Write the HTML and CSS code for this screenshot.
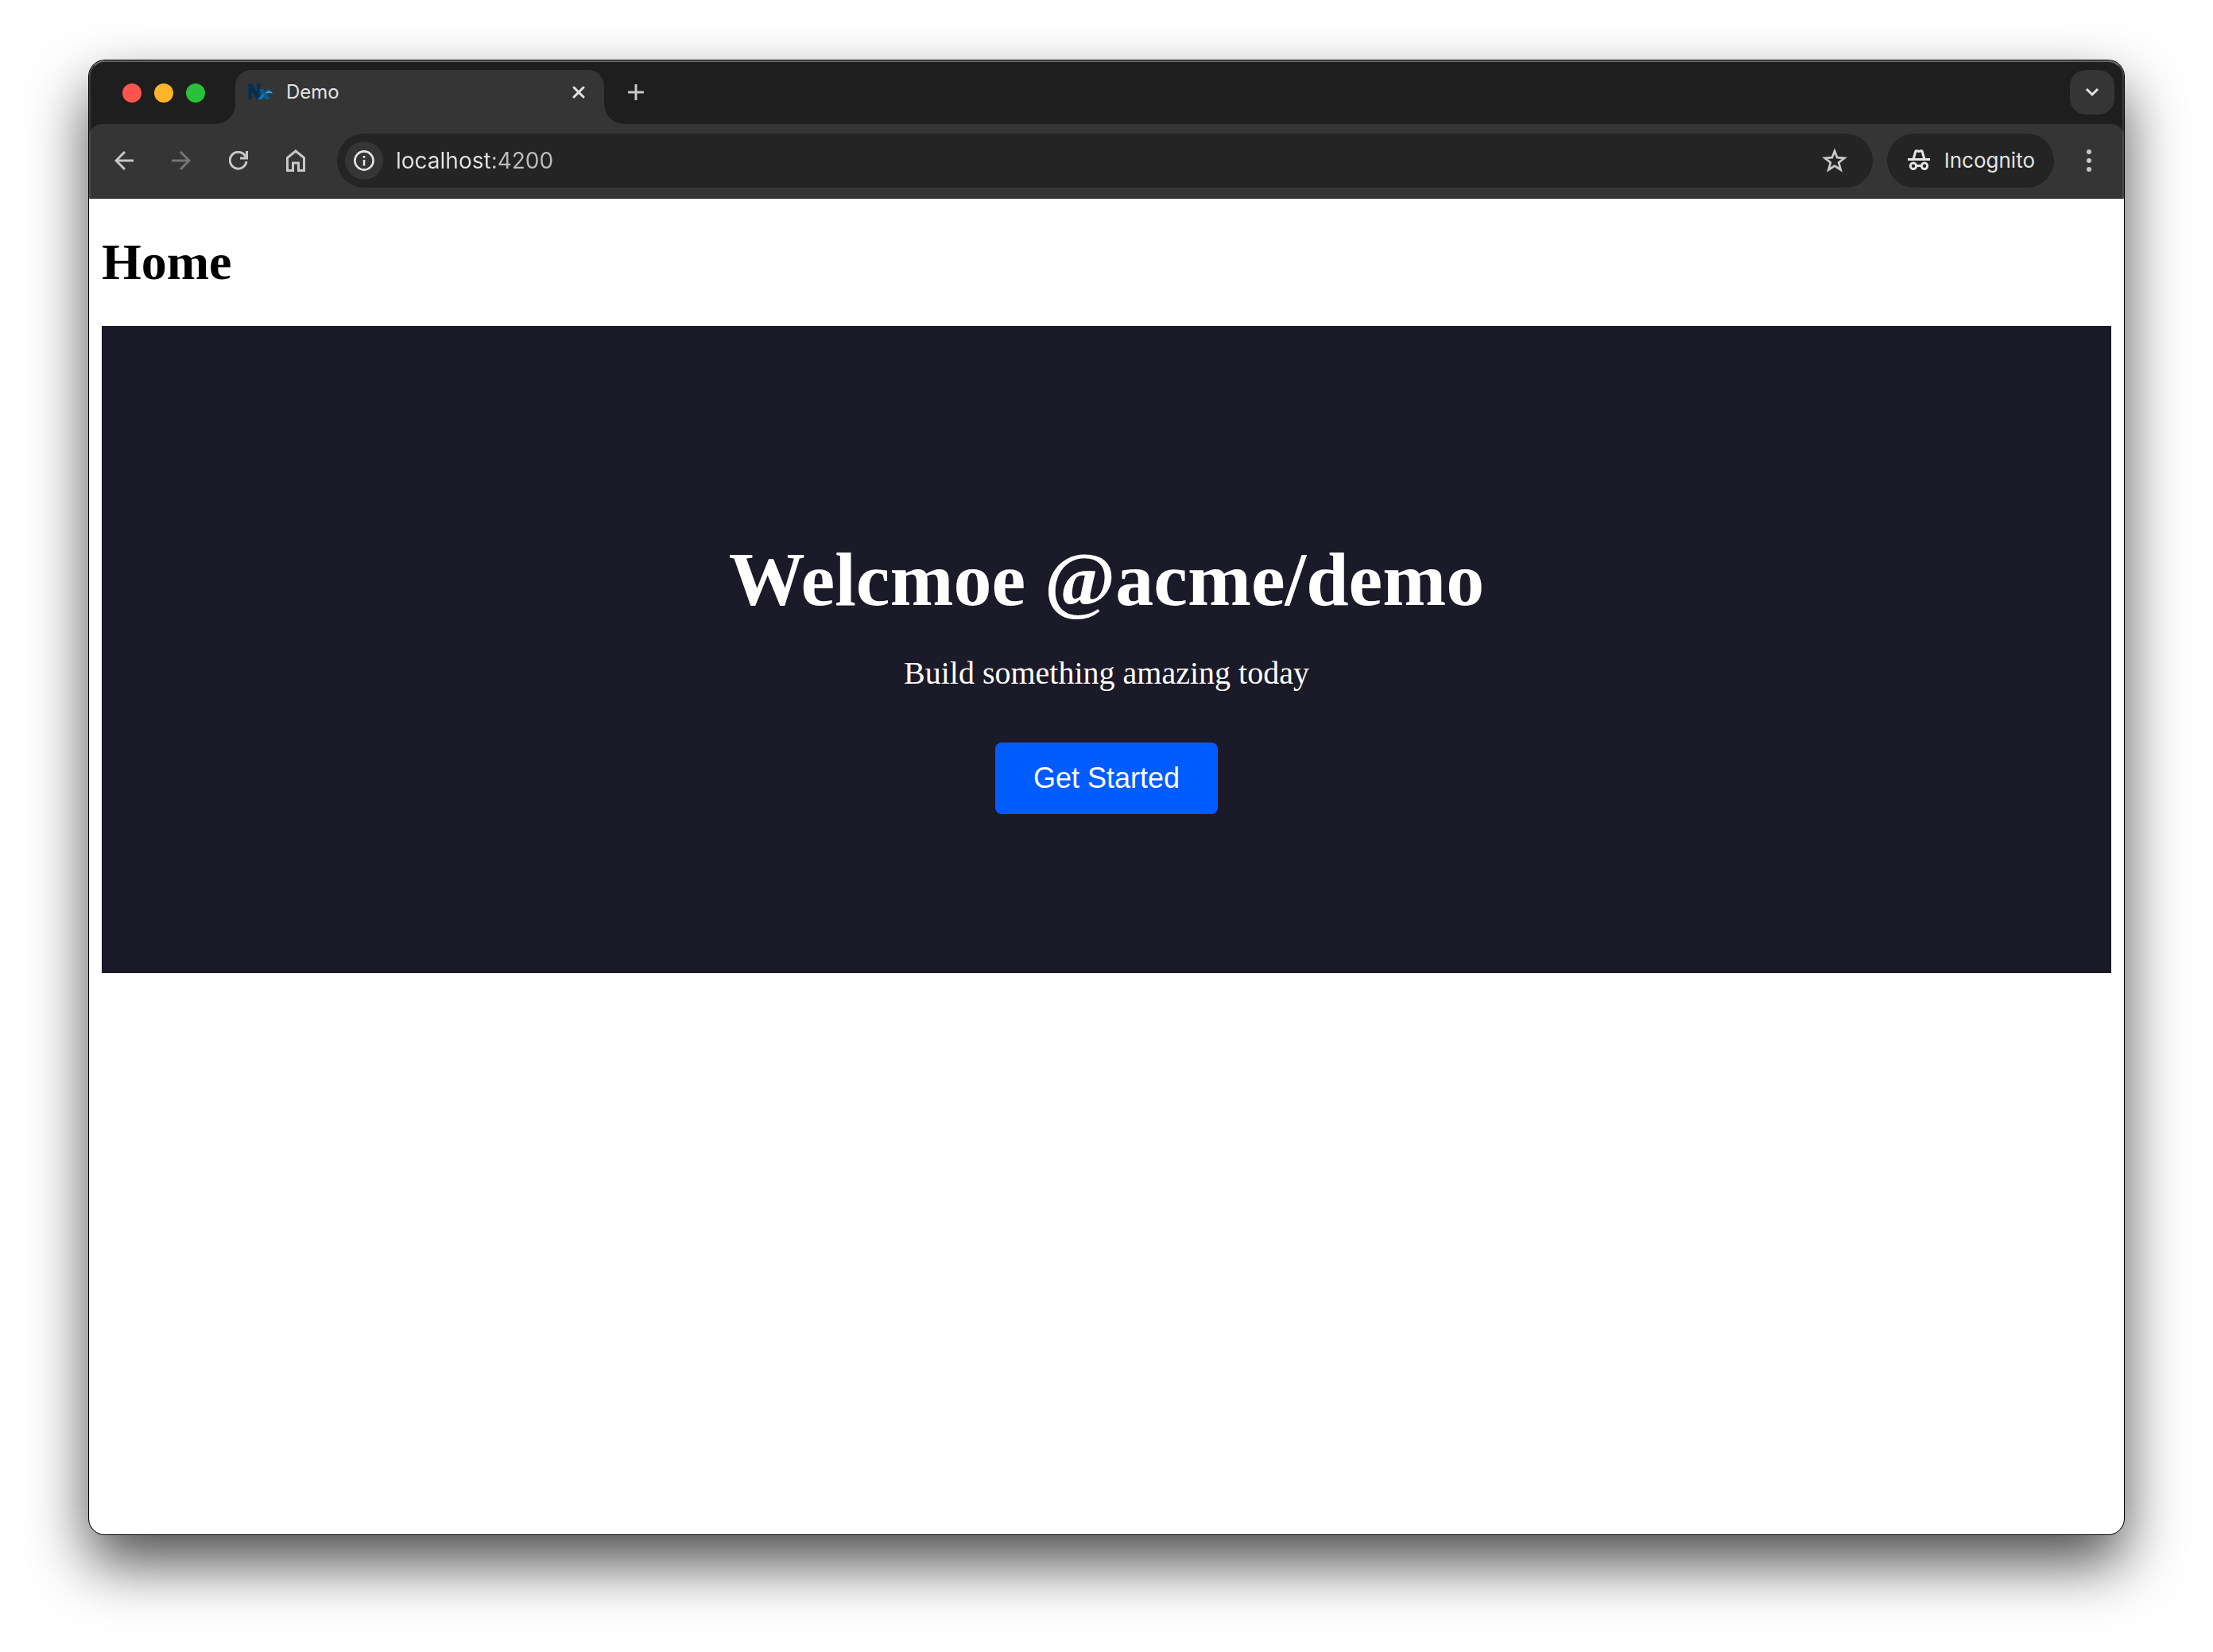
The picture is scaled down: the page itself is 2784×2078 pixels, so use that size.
FILE: index.html
```html
<!DOCTYPE html>
<html lang="en">
<head>
<meta charset="utf-8">
<title>Demo</title>
<link rel="stylesheet" href="styles.css">
</head>
<body>
<div class="window">
  <header class="chrome">
    <div class="tabstrip">
      <div class="lights">
        <button class="light light-close" aria-label="Close window"></button>
        <button class="light light-min" aria-label="Minimize window"></button>
        <button class="light light-max" aria-label="Zoom window"></button>
      </div>
      <div class="tab">
        <svg class="favicon" viewBox="0 0 32 32" aria-hidden="true">
          <path d="M.5 5H5l6 10V5h4.500v8l-2 5 2 4v3H11L5 15v10H.500z" fill="#002f56"/>
          <path d="M14 12h5l2 3.500 3-3c3-1 7 1 7.500 6-3-3-6-2-7 .500L28 25h-5.500L20 21.500 17.500 25H12l5-6.500z" fill="#075a94"/>
          <path d="M12.500 25l6-8 2.500 2.500-3.500 5.500z" fill="#0c76b6"/>
          <path d="M22 17.500c1.500-3 7-3.500 8.500 0-3-1.500-6-1-8.500 0z" fill="#6cc6e6"/>
        </svg>
        <span class="tab-title">Demo</span>
        <button class="icon-btn tab-close" aria-label="Close tab">
          <svg width="16" height="16" viewBox="0 0 16 16"><path d="M2 2l12 12M14 2L2 14" stroke="#e3e3e3" stroke-width="3" stroke-linecap="round"/></svg>
        </button>
      </div>
      <button class="icon-btn new-tab" aria-label="New tab">
        <svg width="20" height="20" viewBox="0 0 20 20"><path d="M10 0v20M0 10h20" stroke="#c7c7c7" stroke-width="3"/></svg>
      </button>
      <button class="icon-btn tab-search" aria-label="Search tabs">
        <svg width="18" height="12" viewBox="0 0 18 12"><path d="M2 2l7 7 7-7" fill="none" stroke="#e3e3e3" stroke-width="3"/></svg>
      </button>
    </div>
    <div class="toolbar">
      <nav class="nav">
        <button class="icon-btn" aria-label="Back">
          <svg width="24" height="24" viewBox="0 0 24 24"><path d="M24 12H2M13 1L2 12l11 11" fill="none" stroke="#c7c7c7" stroke-width="3"/></svg>
        </button>
        <button class="icon-btn" aria-label="Forward" disabled>
          <svg width="24" height="24" viewBox="0 0 24 24"><path d="M0 12h22M11 1l11 11-11 11" fill="none" stroke="#757575" stroke-width="3"/></svg>
        </button>
        <button class="icon-btn" aria-label="Reload">
          <svg width="24" height="24" viewBox="0 0 24 24"><path d="M22 13A10.400 10.400 0 1 1 20 5.500L22 8M22.500 0v9H14" fill="none" stroke="#c7c7c7" stroke-width="3"/></svg>
        </button>
        <button class="icon-btn" aria-label="Home">
          <svg width="24" height="28" viewBox="0 0 24 28"><path d="M1.500 26.500V10.500L12 2l10.500 8.500v16h-7V17h-7v9.500z" fill="none" stroke="#c7c7c7" stroke-width="3"/></svg>
        </button>
      </nav>
      <div class="omnibox">
        <button class="icon-btn site-info" aria-label="View site information">
          <svg width="26" height="26" viewBox="0 0 26 26"><circle cx="13" cy="13" r="11.600" fill="none" stroke="#e3e3e3" stroke-width="2.600"/><path d="M13 12v7.500M13 7v2.800" stroke="#e3e3e3" stroke-width="2.600"/></svg>
        </button>
        <input class="url" type="text" value="localhost:4200" aria-label="Address">
        <button class="icon-btn bookmark" aria-label="Bookmark this page">
          <svg width="32" height="32" viewBox="0 0 32 32"><path d="M16 4l3.200 8.200 9 .7-7 5.600 2.400 9-7.600-4.900-7.600 4.900 2.400-9-7-5.600 9-.7z" fill="none" stroke="#c7c7c7" stroke-width="2.800"/></svg>
        </button>
      </div>
      <button class="incognito">
        <svg width="28" height="28" viewBox="0 0 28 28" aria-hidden="true"><g fill="none" stroke="#e3e3e3" stroke-width="3"><path d="M0 12.500h28M7 12.500l2.800-10c.300-1 1-1 1.700-.7L14 2.500l2.500-.7c.7-.3 1.400-.3 1.700.7l2.800 10"/><circle cx="7" cy="20.700" r="3.700"/><circle cx="21" cy="20.700" r="3.700"/><path d="M11 20.500h6"/></g></svg>
        <span>Incognito</span>
      </button>
      <button class="icon-btn menu" aria-label="Menu">
        <svg width="8" height="28" viewBox="0 0 8 28"><g fill="#c7c7c7"><circle cx="4" cy="3" r="3"/><circle cx="4" cy="14" r="3"/><circle cx="4" cy="25" r="3"/></g></svg>
      </button>
    </div>
  </header>
  <main class="page">
    <h1 class="page-title">Home</h1>
    <section class="hero">
      <h1 class="hero-title">Welcmoe @acme/demo</h1>
      <p class="hero-text">Build something amazing today</p>
      <button class="cta">Get Started</button>
    </section>
  </main>
</div>
</body>
</html>
```
FILE: styles.css
```css
* { box-sizing: border-box; }

body {
  display: flex;
  min-height: 100vh;
  margin: 0;
  padding: 76px 112px 148px;
  background: #fff;
  font-family: Inter, "Liberation Sans", sans-serif;
}

button {
  padding: 0;
  border: 0;
  background: none;
  color: inherit;
  font: inherit;
}

svg { display: block; flex: none; }

.window {
  display: flex;
  flex: 1;
  flex-direction: column;
  overflow: hidden;
  border-radius: 20px;
  background: #fff;
  box-shadow: 0 0 0 1px #000, 0 36px 76px rgba(0, 0, 0, 0.7);
}

.chrome {
  position: relative;
  background: #1e1e1e;
  color: #e3e3e3;
}

.chrome::after {
  content: "";
  position: absolute;
  inset: 0;
  border: 2px solid rgba(255, 255, 255, 0.12);
  border-top-color: rgba(255, 255, 255, 0.32);
  border-bottom: 0;
  border-radius: 20px 20px 0 0;
  pointer-events: none;
}

.tabstrip {
  display: flex;
  align-items: center;
  height: 80px;
  padding: 12px 12px 0 42px;
}

.lights {
  display: flex;
  gap: 16px;
  padding-bottom: 10px;
}

.light { width: 24px; height: 24px; border-radius: 50%; }
.light-close { background: #ff544d; }
.light-min { background: #ffb429; }
.light-max { background: #28c137; }

.tab {
  position: relative;
  display: flex;
  align-items: center;
  width: 464px;
  height: 68px;
  margin-left: 38px;
  padding: 0 24px 12px 16px;
  border-radius: 20px 20px 0 0;
  background: #353535;
}

.tab::before,
.tab::after {
  content: "";
  position: absolute;
  bottom: 0;
  width: 24px;
  height: 24px;
}

.tab::before {
  right: 100%;
  background: radial-gradient(circle at 0 0, transparent 23px, #353535 24px);
}

.tab::after {
  left: 100%;
  background: radial-gradient(circle at 100% 0, transparent 23px, #353535 24px);
}

.favicon { width: 32px; height: 32px; }

.tab-title {
  flex: 1;
  margin-left: 16px;
  font-size: 24px;
  line-height: 32px;
}

.icon-btn {
  display: flex;
  flex: none;
  align-items: center;
  justify-content: center;
}

.new-tab { width: 56px; height: 56px; margin: 0 0 12px 12px; }

.tab-search {
  width: 56px;
  height: 56px;
  margin: 0 0 12px auto;
  border-radius: 20px;
  background: #353535;
}

.toolbar {
  display: flex;
  align-items: center;
  height: 94px;
  padding: 0 16px 2px 16px;
  border-radius: 16px 16px 0 0;
  background: #353535;
}

.nav { display: flex; gap: 16px; }
.nav .icon-btn { width: 56px; height: 56px; }

.omnibox {
  display: flex;
  flex: 1;
  align-items: center;
  height: 68px;
  margin: 0 18px 0 24px;
  padding: 0 32px 0 10px;
  border-radius: 34px;
  background: #242424;
}

.site-info { width: 48px; height: 48px; border-radius: 50%; background: #353535; }

.url {
  flex: 1;
  min-width: 0;
  margin: 0 16px;
  padding: 0;
  border: 0;
  outline: 0;
  background: linear-gradient(90deg, #e3e3e3 118px, #bdbdbd 118px);
  background-clip: text;
  -webkit-text-fill-color: transparent;
  color: #e3e3e3;
  font: 28px/36px Inter, "Liberation Sans", sans-serif;
}

.incognito {
  display: flex;
  align-items: center;
  gap: 18px;
  height: 68px;
  padding: 0 24px 0 26px;
  border-radius: 34px;
  background: #242424;
  font-size: 26px;
  line-height: 32px;
}

.menu { width: 56px; height: 56px; margin-left: 16px; }

.page {
  flex: 1;
  padding: 43px 16px 16px;
  font-family: "Liberation Serif", serif;
}

.page-title {
  margin: 0 0 43px;
  color: #000;
  font-size: 64px;
  line-height: 74px;
}

.hero {
  padding: 264px 16px 200px;
  background: #1b1a29;
  color: #fff;
  text-align: center;
}

.hero-title {
  margin: 0 0 40px;
  font-size: 96px;
  line-height: 110px;
}

.hero-text {
  margin: 0 0 64px;
  font-size: 40px;
  line-height: 46px;
}

.cta {
  height: 90px;
  padding: 0 48px;
  border-radius: 8px;
  background: #005cff;
  font: 36px/42px "Liberation Sans", sans-serif;
}
```
